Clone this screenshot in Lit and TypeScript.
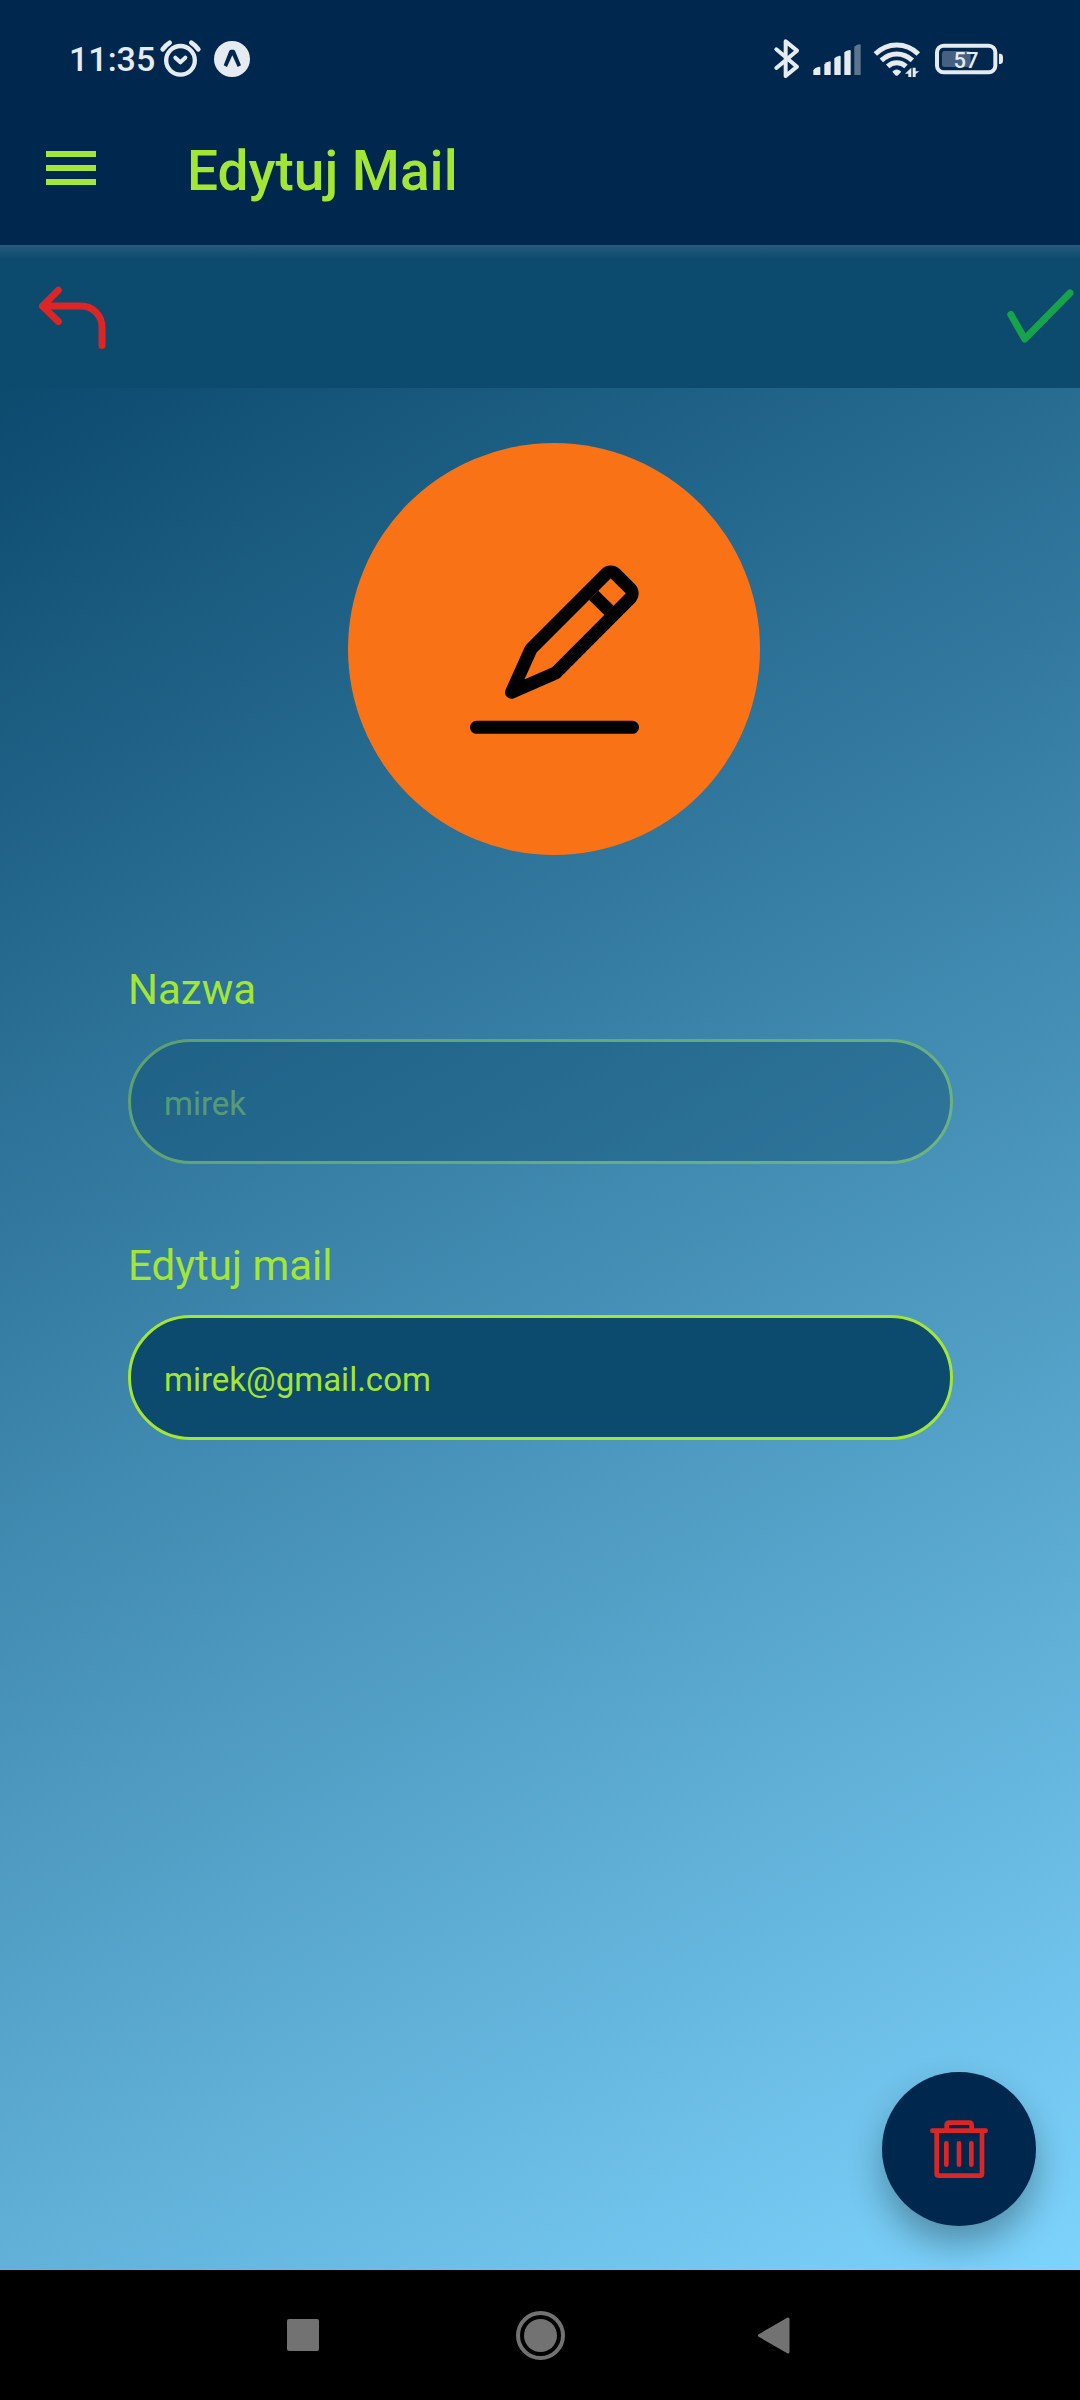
import { LitElement, html, css } from "lit";
import { customElement, state } from "lit/decorators.js";

@customElement("status-bar")
class StatusBar extends LitElement {
  static styles = css`
    :host {
      display: flex;
      justify-content: space-between;
      align-items: center;
      box-sizing: border-box;
      height: 91px;
      padding: 27px 77px 0 69px;
      color: #e6eaf1;
    }
    .group {
      display: flex;
      align-items: center;
      gap: 14px;
    }
    .group.right {
      gap: 13px;
    }
    .time {
      font-size: 34px;
      line-height: 36px;
      font-weight: 500;
      margin-right: -8px;
    }
    svg {
      display: block;
      overflow: visible;
      height: 40px;
    }
    .battery {
      font-size: 66px;
      font-weight: 500;
    }
  `;

  render() {
    return html`
      <div class="group">
        <span class="time">11:35</span>
        <svg width="39" viewBox="333 57 117 120" fill="none" stroke="currentColor" aria-hidden="true">
          <circle cx="391.5" cy="121" r="43" stroke-width="13" />
          <path d="M338 88Q346 76 359 68M445 88Q437 76 424 68" stroke-width="14" stroke-linecap="round" />
          <path d="M376 113L391 127L406 113" stroke-width="12" stroke-linecap="round" stroke-linejoin="round" />
        </svg>
        <svg width="36" viewBox="492 57 108 120" aria-hidden="true">
          <circle cx="546" cy="117" r="54" fill="currentColor" />
          <path
            d="M521 136L538 92Q540 89 543 89H550Q553 89 555 92L573 136L563 141L547 106L531 141Z"
            fill="#00284f"
          />
        </svg>
      </div>
      <div class="group right">
        <svg width="25" viewBox="73 57 75 120" fill="none" stroke="currentColor" aria-hidden="true">
          <path
            d="M80 88L142 140L108 168V64L142 92L80 144"
            stroke-width="12"
            stroke-linecap="round"
            stroke-linejoin="round"
          />
        </svg>
        <svg width="49" viewBox="186 57 147 120" fill="currentColor" aria-hidden="true">
          <path d="M190 165V151Q194 142 209 140Q211 140 211 143V165Z" />
          <path d="M223 165V133Q229 126 239 124Q242 124 242 127V165Z" />
          <path d="M253 165V115Q259 109 269 107Q272 107 272 110V165Z" />
          <path d="M283 165V97Q289 91 299 90Q302 90 302 93V165Z" />
          <path d="M313 165V80Q319 74 329 73Q332 73 332 76V165Z" opacity="0.4" />
        </svg>
        <svg width="48" viewBox="372 57 144 120" aria-hidden="true">
          <g fill="none" stroke="currentColor" stroke-width="15">
            <path d="M376 102Q404 75 440 75Q477 75 505 102" />
            <path d="M394 121Q415 102 440 102Q466 102 487 121" />
            <path d="M413 139Q425 128 440 128Q456 128 468 139" />
          </g>
          <path
            d="M427 155Q440 142 454 155L444 166Q440 169 436 166Z"
            fill="currentColor"
          />
          <path
            d="M484 143V171H475V161H465ZM488 171V143L497 143V154H508L497 162V171Z"
            fill="currentColor"
          />
        </svg>
        <svg width="68" viewBox="555 57 204 120" role="img" aria-label="Bateria 57%">
          <rect x="576" y="93" width="86" height="48" rx="8" fill="#456080" />
          <rect x="561" y="77" width="175" height="80" rx="20" fill="none" stroke="currentColor" stroke-width="12" />
          <path d="M747 101H752Q759 102 759 110V123Q759 131 752 132H747Z" fill="currentColor" />
          <text class="battery" x="648" y="143" text-anchor="middle" fill="currentColor">57</text>
        </svg>
      </div>
    `;
  }
}

@customElement("system-nav")
class SystemNav extends LitElement {
  static styles = css`
    :host {
      display: flex;
      justify-content: center;
      align-items: center;
      gap: 141px;
      height: 130px;
      background: #000;
    }
    button {
      width: 96px;
      height: 96px;
      padding: 0;
      border: 0;
      background: none;
      color: #727272;
    }
    svg {
      display: block;
    }
  `;

  render() {
    return html`
      <button aria-label="Ostatnie aplikacje">
        <svg width="96" height="96" viewBox="0 0 96 96">
          <rect x="32" y="32" width="32" height="32" rx="2" fill="currentColor" />
        </svg>
      </button>
      <button aria-label="Ekran główny">
        <svg width="96" height="96" viewBox="0 0 96 96">
          <circle cx="48.5" cy="48.5" r="22.5" fill="none" stroke="currentColor" stroke-width="4" />
          <circle cx="48.5" cy="48.5" r="16.5" fill="currentColor" />
        </svg>
      </button>
      <button aria-label="Wstecz">
        <svg width="96" height="96" viewBox="0 0 96 96">
          <path
            d="M30.5 48.5L59 32V65Z"
            fill="currentColor"
            stroke="currentColor"
            stroke-width="3"
            stroke-linejoin="round"
          />
        </svg>
      </button>
    `;
  }
}

@customElement("app-root")
class AppRoot extends LitElement {
  @state() private email = "mirek@gmail.com";

  static styles = css`
    :host {
      display: flex;
      flex-direction: column;
      min-height: 100vh;
      font-family: Roboto, "Liberation Sans", sans-serif;
      color: #a3e635;
    }
    header {
      background: #00284f;
    }
    button {
      display: block;
      padding: 0;
      border: 0;
      background: none;
      color: inherit;
      font: inherit;
    }
    svg {
      display: block;
    }
    .appbar {
      display: flex;
      align-items: center;
      gap: 83px;
      height: 154px;
      padding: 0 38px;
    }
    .title {
      margin: 0;
      padding-top: 6px;
      font-size: 55px;
      line-height: 64px;
      font-weight: 500;
    }
    .toolbar {
      display: flex;
      justify-content: space-between;
      align-items: center;
      height: 143px;
      padding: 0 1px 0 33px;
      background: linear-gradient(rgba(255, 255, 255, 0.1), rgba(255, 255, 255, 0) 14px) #0c4a6e;
    }
    .back {
      color: #dc2626;
    }
    .confirm {
      color: #16a34a;
    }
    main {
      position: relative;
      flex: 1;
      padding: 55px 127px 55px 128px;
      background: linear-gradient(150deg, #0c4a6e, #7dd3fc);
    }
    .avatar {
      display: flex;
      justify-content: center;
      padding-left: 27px;
      margin-bottom: 108px;
    }
    .disc {
      display: grid;
      place-items: center;
      width: 412px;
      height: 412px;
      border-radius: 50%;
      background: #f97316;
      color: #000;
    }
    form {
      display: flex;
      flex-direction: column;
      gap: 75px;
    }
    .field {
      display: flex;
      flex-direction: column;
      gap: 24px;
    }
    label {
      padding-top: 2px;
      font-size: 42px;
      line-height: 50px;
    }
    input {
      box-sizing: border-box;
      width: 100%;
      height: 125px;
      margin: 0;
      padding: 4px 33px 0;
      border: 3px solid #a3e635;
      border-radius: 63px;
      outline: none;
      background: #0c4a6e;
      color: #a3e635;
      font-family: inherit;
      font-size: 33px;
    }
    input:disabled {
      opacity: 0.4;
      color: rgba(163, 230, 53, 0.85);
    }
    .delete {
      position: absolute;
      right: 44px;
      bottom: 44px;
      display: grid;
      place-items: center;
      width: 154px;
      height: 154px;
      border-radius: 50%;
      background: #00284f;
      color: #dc2626;
      box-shadow: 0 18px 34px rgba(0, 0, 0, 0.3);
    }
  `;

  private onEmail(e: Event) {
    this.email = (e.target as HTMLInputElement).value;
  }

  render() {
    return html`
      <header>
        <status-bar></status-bar>
        <div class="appbar">
          <button aria-label="Menu">
            <svg width="66" height="66" viewBox="0 0 66 66" fill="currentColor">
              <path d="M8 16H58V22H8ZM8 30H58V36H8ZM8 44H58V50H8Z" />
            </svg>
          </button>
          <h1 class="title">Edytuj Mail</h1>
        </div>
      </header>
      <div class="toolbar">
        <button class="back" aria-label="Cofnij">
          <svg width="78" height="78" viewBox="0 0 78 78" fill="none" stroke="currentColor"
            stroke-width="7" stroke-linecap="round" stroke-linejoin="round">
            <path d="M25.3 12.3L9.5 28L25.3 43.5M9.5 28H48A21 21 0 0 1 69 49.5V67.5" />
          </svg>
        </button>
        <button class="confirm" aria-label="Zapisz">
          <svg width="78" height="78" viewBox="0 0 78 78" fill="none" stroke="currentColor"
            stroke-width="7" stroke-linecap="round" stroke-linejoin="round">
            <path d="M9.8 36.5L23.8 61L69 15" />
          </svg>
        </button>
      </div>
      <main>
        <div class="avatar">
          <div class="disc">
            <svg width="169" height="169" viewBox="0 0 169 169" fill="none" stroke="currentColor"
              stroke-width="13" stroke-linejoin="round" aria-hidden="true">
              <path d="M6.5 162.3H162.5" stroke-linecap="round" />
              <path
                d="M41.5 127.3L61 84L136 9A6.5 6.5 0 0 1 145.5 9L160 23.3A7 7 0 0 1 160 33.3L86 107.7Z"
              />
              <path d="M123.7 30.3L139 45.3" />
            </svg>
          </div>
        </div>
        <form @submit=${(e: Event) => e.preventDefault()}>
          <div class="field">
            <label for="name">Nazwa</label>
            <input id="name" type="text" value="mirek" disabled />
          </div>
          <div class="field">
            <label for="email">Edytuj mail</label>
            <input id="email" type="email" .value=${this.email} @input=${this.onEmail} />
          </div>
        </form>
        <button class="delete" aria-label="Usuń">
          <svg width="58" height="58" viewBox="270 300 174 174" fill="none" stroke="currentColor"
            stroke-width="14" stroke-linecap="round" stroke-linejoin="round">
            <path d="M277 332H437M290 332V461Q290 467 296 467H420Q426 467 426 461V332" />
            <path d="M320 330V316Q320 308 328 308H387Q395 308 395 316V330" />
            <path d="M319 370V434M357 370V434M394 370V434" />
          </svg>
        </button>
      </main>
      <system-nav></system-nav>
    `;
  }
}
